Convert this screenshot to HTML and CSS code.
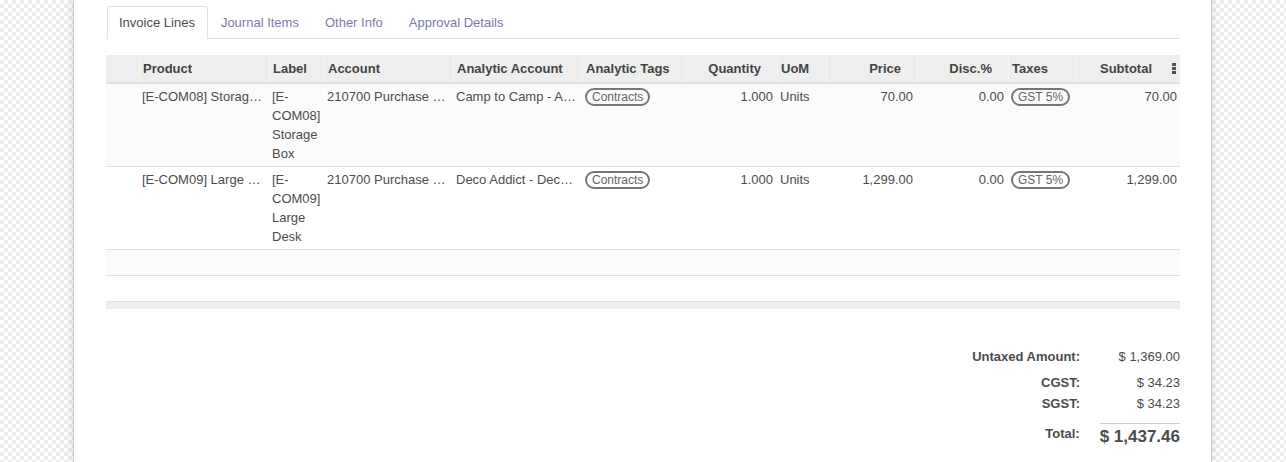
FILE: index.html
```html
<!DOCTYPE html>
<html>
<head>
<meta charset="utf-8">
<link rel="stylesheet" href="styles.css">
</head>
<body>
<div class="sheet">
  <ul class="tabs">
    <li class="tab active">Invoice Lines</li>
    <li class="tab">Journal Items</li>
    <li class="tab">Other Info</li>
    <li class="tab">Approval Details</li>
  </ul>

  <table class="lines">
    <colgroup>
      <col style="width:33px"><col style="width:130px"><col style="width:55px"><col style="width:129px">
      <col style="width:129px"><col style="width:104px"><col style="width:91px"><col style="width:49px">
      <col style="width:91px"><col style="width:91px"><col style="width:68px"><col style="width:104px">
    </colgroup>
    <thead>
      <tr>
        <th class="handle"></th>
        <th>Product</th>
        <th>Label</th>
        <th>Account</th>
        <th>Analytic Account</th>
        <th>Analytic Tags</th>
        <th class="num">Quantity</th>
        <th>UoM</th>
        <th class="num">Price</th>
        <th class="num">Disc.%</th>
        <th>Taxes</th>
        <th class="num last">Subtotal<svg class="kebab" width="4" height="11" viewBox="0 0 4 11"><rect x="0" y="0" width="4" height="3" fill="#4a4f59"/><rect x="0" y="4" width="4" height="3" fill="#4a4f59"/><rect x="0" y="8" width="4" height="3" fill="#4a4f59"/></svg></th>
      </tr>
    </thead>
    <tbody>
      <tr class="odd">
        <td></td>
        <td class="trunc">[E-COM08] Storage Box</td>
        <td class="wrap">[E-COM08] Storage Box</td>
        <td class="trunc">210700 Purchase Expense</td>
        <td class="trunc">Camp to Camp - Administrative</td>
        <td class="tagcell"><span class="badge">Contracts</span></td>
        <td class="num">1.000</td>
        <td>Units</td>
        <td class="num">70.00</td>
        <td class="num">0.00</td>
        <td class="tagcell"><span class="badge">GST 5%</span></td>
        <td class="num sub">70.00</td>
      </tr>
      <tr>
        <td></td>
        <td class="trunc">[E-COM09] Large Desk</td>
        <td class="wrap">[E-COM09] Large Desk</td>
        <td class="trunc">210700 Purchase Expense</td>
        <td class="trunc">Deco Addict - Deco Addict</td>
        <td class="tagcell"><span class="badge">Contracts</span></td>
        <td class="num">1.000</td>
        <td>Units</td>
        <td class="num">1,299.00</td>
        <td class="num">0.00</td>
        <td class="tagcell"><span class="badge">GST 5%</span></td>
        <td class="num sub">1,299.00</td>
      </tr>
      <tr class="odd empty"><td colspan="12"></td></tr>
      <tr class="empty"><td colspan="12"></td></tr>
    </tbody>
    <tfoot>
      <tr><td colspan="12"></td></tr>
    </tfoot>
  </table>

  <div class="totals">
    <div class="trow">
      <span class="tlabel">Untaxed Amount:</span>
      <span class="tval">$ 1,369.00</span>
    </div>
    <div class="taxes">
      <div class="trow">
        <span class="tlabel">CGST:</span>
        <span class="tval">$ 34.23</span>
      </div>
      <div class="trow">
        <span class="tlabel">SGST:</span>
        <span class="tval">$ 34.23</span>
      </div>
    </div>
    <div class="trow total">
      <span class="tlabel">Total:</span>
      <span class="tval">$ 1,437.46</span>
    </div>
  </div>
</div>
</body>
</html>
```

FILE: styles.css
```css
html, body {
  margin: 0;
  padding: 0;
  height: 100%;
}
body {
  font-family: "Liberation Sans", Arial, sans-serif;
  font-size: 13px;
  color: #4c4c4c;
  background-color: #f7f7f7;
  background-image: conic-gradient(#ededed 25%, #ffffff 0 50%, #ededed 0 75%, #ffffff 0);
  background-size: 8px 8px;
  overflow: hidden;
}
.sheet {
  box-sizing: border-box;
  width: 1139px;
  min-height: 100%;
  margin-left: 73px;
  padding: 6px 31px 0 32px;
  background: #fff;
  border-left: 1px solid #c9c7d6;
  border-right: 1px solid #c9c7d6;
  box-shadow: 0 0 10px rgba(0, 0, 0, 0.13);
}
.tabs {
  list-style: none;
  margin: 0;
  padding: 0 0 0 1px;
  display: flex;
  border-bottom: 1px solid #dee2e6;
  line-height: 19px;
}
.tab {
  padding: 6px 12px 6px 12px;
  border: 1px solid transparent;
  border-bottom: none;
  color: #7c7bad;
  margin-bottom: -1px;
  border-radius: 3px 3px 0 0;
}
.tab.active {
  color: #4c4c4c;
  border-color: #dee2e6;
  background: #fff;
  padding-left: 11px;
  padding-bottom: 7px;
}
.lines {
  width: 1074px;
  margin-top: 16px;
  table-layout: fixed;
  border-collapse: collapse;
  line-height: 19px;
}
.lines th {
  background: #eeeeee;
  background-clip: padding-box;
  font-weight: bold;
  text-align: left;
  height: 28px;
  padding: 0 4px 0 4px;
  border-bottom: 2px solid #dee2e6;
  color: #444;
  white-space: nowrap;
  overflow: hidden;
  box-sizing: border-box;
  box-shadow: inset 1px 0 0 #f6f6f6;
}
.lines th.handle { box-shadow: none; }
.lines th.num { text-align: right; padding-right: 16px; }
.lines th.last { padding-right: 4px; }
.kebab {
  margin-left: 20px;
  vertical-align: -1px;
}
.lines td {
  padding: 3px 4px 3px 3px;
  vertical-align: top;
  border-top: 1px solid #dee2e6;
  overflow: hidden;
}
.lines tbody tr:first-child td { border-top: none; }
.lines tr.odd td { background: #fbfbfb; }
.lines tr.empty td { height: 18px; padding: 3px 4px 4px 3px; }
.lines td.num { text-align: right; }
.lines td.sub { padding-right: 3px; }
.trunc {
  white-space: nowrap;
  text-overflow: ellipsis;
}
.wrap {
  white-space: normal;
}
.badge {
  display: inline-block;
  border: 2px solid #777;
  border-radius: 10px;
  padding: 0 5px;
  font-size: 12px;
  line-height: 14px;
  color: #666;
  vertical-align: top;
  margin-top: 1px;
  white-space: nowrap;
}
.lines tfoot td {
  background: #eeeeee;
  border-top: 1px solid #dee2e6;
  height: 7px;
  padding: 0;
}
.totals {
  margin-top: 37px;
  display: flex;
  flex-direction: column;
  align-items: flex-end;
}
.taxes {
  margin-top: 5px;
  display: flex;
  flex-direction: column;
  align-items: flex-end;
}
.trow {
  display: flex;
  align-items: flex-start;
  line-height: 21px;
}
.tlabel {
  font-weight: bold;
  text-align: right;
  padding-right: 20px;
  white-space: nowrap;
}
.tval {
  min-width: 80px;
  text-align: right;
  white-space: nowrap;
}
.trow.total {
  margin-top: 9px;
  line-height: 19px;
}
.trow.total .tlabel { padding-top: 1px; }
.trow.total .tval {
  border-top: 1px solid #cccccc;
  font-weight: bold;
  font-size: 17px;
  line-height: 24px;
  padding-top: 1px;
}
```
